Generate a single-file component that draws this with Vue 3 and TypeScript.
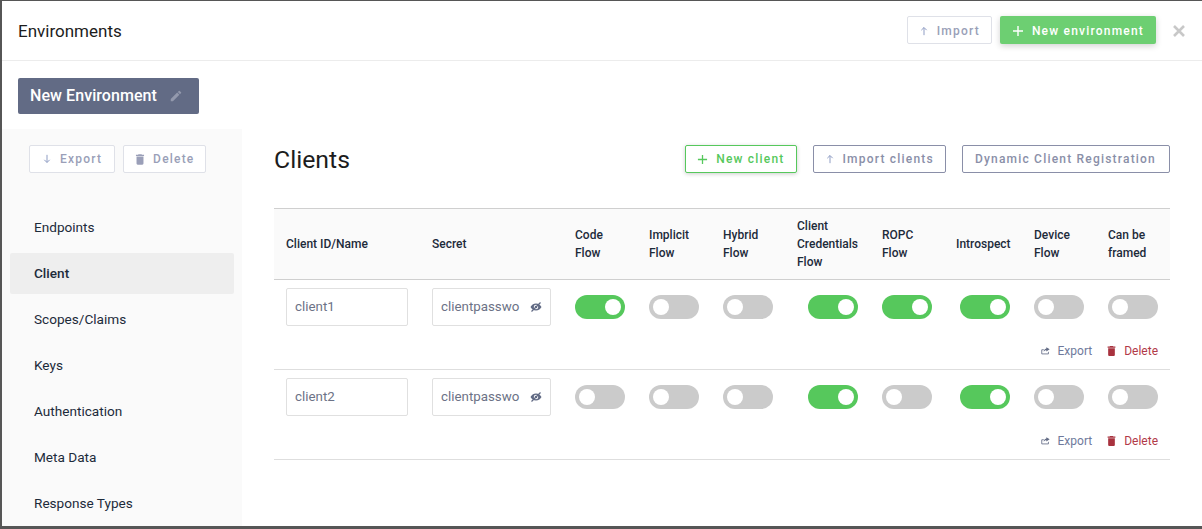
<script setup lang="ts">
import { ref } from 'vue';

type Flag = 'code' | 'implicit' | 'hybrid' | 'credentials' | 'ropc' | 'introspect' | 'device' | 'framed';

const navItems = ['Endpoints', 'Client', 'Scopes/Claims', 'Keys', 'Authentication', 'Meta Data', 'Response Types'];

const flows: { key: Flag; lines: string[]; end?: boolean }[] = [
  { key: 'code', lines: ['Code', 'Flow'] },
  { key: 'implicit', lines: ['Implicit', 'Flow'] },
  { key: 'hybrid', lines: ['Hybrid', 'Flow'] },
  { key: 'credentials', lines: ['Client', 'Credentials', 'Flow'], end: true },
  { key: 'ropc', lines: ['ROPC', 'Flow'] },
  { key: 'introspect', lines: ['Introspect'], end: true },
  { key: 'device', lines: ['Device', 'Flow'] },
  { key: 'framed', lines: ['Can be', 'framed'] },
];

const clients = ref<{ id: string; secret: string; flags: Record<Flag, boolean> }[]>([
  {
    id: 'client1',
    secret: 'clientpasswo',
    flags: { code: true, implicit: false, hybrid: false, credentials: true, ropc: true, introspect: true, device: false, framed: false },
  },
  {
    id: 'client2',
    secret: 'clientpasswo',
    flags: { code: false, implicit: false, hybrid: false, credentials: true, ropc: false, introspect: true, device: false, framed: false },
  },
]);
</script>

<template>
  <div class="backdrop">
    <div class="modal">
      <header class="modal-header">
        <h1 class="modal-title">Environments</h1>
        <div class="header-actions">
          <button class="btn btn-outline tight">
            <svg class="arrow" viewBox="0 0 12 12"><path d="M6 11V2M2.800 5L6 1.800 9.200 5" /></svg>
            Import
          </button>
          <button class="btn btn-green">
            <svg class="plus" viewBox="0 0 12 12"><path d="M6 1v10M1 6h10" /></svg>
            New environment
          </button>
          <svg class="close" viewBox="0 0 14 14"><path d="M2 2l10 10M12 2L2 12" /></svg>
        </div>
      </header>

      <div class="env-row">
        <div class="env-chip">
          New Environment
          <svg class="pencil" viewBox="0 0 24 24"><path d="M3 17.250V21h3.750L17.810 9.940l-3.750-3.750L3 17.250zM20.710 7.040a1 1 0 0 0 0-1.410l-2.340-2.340a1 1 0 0 0-1.410 0l-1.830 1.830 3.750 3.750 1.830-1.830z" /></svg>
        </div>
      </div>

      <div class="body">
        <aside class="sidebar">
          <div class="side-actions">
            <button class="btn btn-outline">
              <svg class="arrow" viewBox="0 0 12 12"><path d="M6 1v9M2.800 7L6 10.200 9.200 7" /></svg>
              Export
            </button>
            <button class="btn btn-outline tight">
              <svg class="trash" viewBox="4 2.500 16 19"><path d="M6 19a2 2 0 0 0 2 2h8a2 2 0 0 0 2-2V7H6v12zM19 4h-3.500l-1-1h-5l-1 1H5v2h14V4z" /></svg>
              Delete
            </button>
          </div>
          <nav class="nav">
            <a v-for="item in navItems" :key="item" class="nav-item" :class="{ active: item === 'Client' }">{{ item }}</a>
          </nav>
        </aside>

        <main class="content">
          <div class="content-head">
            <h2 class="clients-title">Clients</h2>
            <div class="client-actions">
              <button class="btn btn-green-outline tight">
                <svg class="plus" viewBox="0 0 12 12"><path d="M6 1v10M1 6h10" /></svg>
                New client
              </button>
              <button class="btn btn-dark-outline tight">
                <svg class="arrow" viewBox="0 0 12 12"><path d="M6 11V2M2.800 5L6 1.800 9.200 5" /></svg>
                Import clients
              </button>
              <button class="btn btn-dark-outline wide">Dynamic Client Registration</button>
            </div>
          </div>

          <div class="table">
            <div class="grid head-row">
              <div class="th">Client ID/Name</div>
              <div class="th">Secret</div>
              <div v-for="flow in flows" :key="flow.key" class="th">
                <span v-for="line in flow.lines" :key="line">{{ line }}</span>
              </div>
            </div>

            <div v-for="client in clients" :key="client.id" class="client-row">
              <div class="grid">
                <div class="field">{{ client.id }}</div>
                <div class="field secret">
                  <span class="secret-text">{{ client.secret }}</span>
                  <svg class="eye" viewBox="0 0 24 24"><path d="M12 5C7 5 2.700 8.100 1 12c1.700 3.900 6 7 11 7s9.300-3.100 11-7c-1.700-3.900-6-7-11-7zm0 11.500a4.500 4.500 0 1 1 0-9 4.500 4.500 0 0 1 0 9zm0-7a2.500 2.500 0 1 0 0 5 2.500 2.500 0 0 0 0-5z" /><path class="slash" d="M3 21L21 3" /></svg>
                </div>
                <div v-for="flow in flows" :key="flow.key" class="toggle-cell" :class="{ end: flow.end }">
                  <button class="toggle" :class="{ on: client.flags[flow.key] }" @click="client.flags[flow.key] = !client.flags[flow.key]">
                    <span class="knob"></span>
                  </button>
                </div>
              </div>
              <div class="row-actions">
                <a class="link export">
                  <svg viewBox="0 0 12 12"><path class="share" d="M9.500 7v2.500h-8V4.500H4" /><path class="share-fill" d="M7 1.500L11 4 7 6.500V5C5.500 5 4.500 5.600 3.800 7 3.900 5 5 3.300 7 3z" /></svg>
                  Export
                </a>
                <a class="link delete">
                  <svg viewBox="5 3 14 18"><path d="M6 19a2 2 0 0 0 2 2h8a2 2 0 0 0 2-2V7H6v12zM19 4h-3.500l-1-1h-5l-1 1H5v2h14V4z" /></svg>
                  Delete
                </a>
              </div>
            </div>
          </div>
        </main>
      </div>
    </div>
  </div>
</template>

<style>
html,
body {
  margin: 0;
  overflow: hidden;
}
</style>

<style scoped>
.backdrop {
  height: 529px;
  box-sizing: border-box;
  padding: 1px 0 3px 2px;
  background: #565656;
  font-family: Roboto, sans-serif;
  overflow: hidden;
}

.modal {
  height: 100%;
  background: #fff;
  display: flex;
  flex-direction: column;
  overflow: hidden;
}

/* Header */
.modal-header {
  height: 59px;
  box-sizing: content-box;
  flex: none;
  display: flex;
  align-items: center;
  justify-content: space-between;
  padding: 0 16px;
  border-bottom: 1px solid #ececec;
}

.modal-title {
  margin: 0;
  font-size: 17px;
  font-weight: 400;
  color: #1c1c1c;
}

.header-actions {
  display: flex;
  align-items: center;
  gap: 8px;
  margin-top: -1px;
}

.close {
  width: 14px;
  height: 14px;
  margin: 2px 0 0 8px;
  fill: none;
  stroke: #c8c8c8;
  stroke-width: 2.600;
}

/* Buttons */
.btn {
  height: 28px;
  box-sizing: border-box;
  display: inline-flex;
  align-items: center;
  gap: 8px;
  padding: 0 12px;
  border-radius: 2px;
  background: #fff;
  font-family: Roboto, sans-serif;
  font-size: 12px;
  font-weight: 500;
  letter-spacing: 1.200px;
  white-space: nowrap;
  cursor: pointer;
}

.btn.tight {
  padding: 0 11px;
}

.btn.wide {
  padding: 0 13px 0 12px;
}

.header-actions .btn {
  padding-top: 2px;
}

.btn-outline {
  border: 1px solid #dfe1e8;
  color: #9a9fb8;
}

.btn-green {
  border: 0;
  background: #6dcf72;
  color: #fff;
  box-shadow: 0 2px 6px rgba(0, 0, 0, 0.18);
}

.btn-green-outline {
  border: 1px solid #56c85c;
  color: #56c85c;
  box-shadow: 0 1px 4px rgba(0, 0, 0, 0.2);
}

.btn-green-outline .plus {
  width: 11px;
  height: 11px;
}

.btn-dark-outline {
  border: 1px solid #8a8fa8;
  color: #8a8fa8;
}

.arrow {
  width: 10px;
  height: 10px;
  fill: none;
  stroke: #8f9dc4;
  stroke-width: 1.200;
}

.plus {
  width: 12px;
  height: 12px;
  fill: none;
  stroke: currentColor;
  stroke-width: 1.400;
}

.trash {
  width: 10px;
  height: 11px;
  fill: #9a9fb8;
}

/* Environment chip */
.env-row {
  flex: none;
  height: 68px;
  padding: 17px 0 0 16px;
  box-sizing: border-box;
}

.env-chip {
  width: 181px;
  height: 36px;
  box-sizing: border-box;
  display: flex;
  align-items: center;
  gap: 12px;
  padding-left: 12px;
  padding-bottom: 2px;
  border-radius: 2px;
  background: #626b85;
  color: #fff;
  font-size: 16px;
  font-weight: 500;
  letter-spacing: 0.070px;
  white-space: nowrap;
}

.pencil {
  width: 14px;
  height: 14px;
  margin-top: 2px;
  fill: #9399ad;
}

/* Body */
.body {
  flex: 1;
  min-height: 0;
  display: flex;
}

.sidebar {
  width: 240px;
  flex: none;
  background: #fafafa;
  padding: 16px 8px 0;
  box-sizing: border-box;
}

.side-actions {
  display: flex;
  gap: 8px;
  padding-left: 19px;
}

.nav {
  display: flex;
  flex-direction: column;
  gap: 5px;
  margin-top: 34px;
}

.nav-item {
  height: 41px;
  box-sizing: border-box;
  flex: none;
  display: flex;
  align-items: center;
  padding: 0 0 2px 24px;
  border-radius: 2px;
  font-size: 13.600px;
  font-weight: 400;
  color: #1d2b3a;
}

.nav-item.active {
  background: #eeeeee;
  font-weight: 500;
}

.content {
  flex: 1;
  min-width: 0;
  padding: 16px 32px 0;
}

.content-head {
  display: flex;
  align-items: center;
  justify-content: space-between;
  height: 28px;
}

.clients-title {
  margin: 0;
  padding-top: 1px;
  font-size: 24.800px;
  font-weight: 400;
  color: #1c1c1c;
}

.client-actions {
  display: flex;
  gap: 16px;
}

/* Table */
.table {
  margin-top: 35px;
  border-top: 1px solid #cfcfcf;
}

.grid {
  display: grid;
  grid-template-columns: 146px 143px 74px 74px 74px 85px 74px 78px 74px 74px;
}

.head-row {
  height: 70px;
  background: #fafafa;
  border-bottom: 1px solid #cfcfcf;
}

.th {
  display: flex;
  flex-direction: column;
  justify-content: center;
  padding-left: 12px;
  font-size: 12px;
  font-weight: 500;
  line-height: 18px;
  color: #1d2b3a;
}

.client-row {
  height: 90px;
  box-sizing: border-box;
  padding-top: 8px;
  border-bottom: 1px solid #dedede;
}

.field {
  width: 122px;
  height: 38px;
  box-sizing: border-box;
  margin-left: 12px;
  display: flex;
  align-items: center;
  padding: 0 0 2px 8px;
  border: 1px solid #e0e0e0;
  border-radius: 2px;
  font-size: 13.333px;
  color: #6c7286;
}

.field.secret {
  width: 119px;
}

.secret-text {
  width: 79px;
  flex: none;
  white-space: nowrap;
}

.eye {
  width: 12px;
  height: 12px;
  margin: 2px 0 0 10px;
  flex: none;
  fill: #626b85;
}

.slash {
  fill: none;
  stroke: #626b85;
  stroke-width: 2.500;
}

.toggle-cell {
  display: flex;
  align-items: center;
  padding-left: 12px;
  height: 38px;
}

.toggle-cell.end {
  justify-content: flex-end;
  padding-right: 12px;
}

.toggle {
  width: 50px;
  height: 24px;
  flex: none;
  padding: 4px;
  border: 0;
  border-radius: 12px;
  background: #cbcbcb;
  display: flex;
  justify-content: flex-start;
  cursor: pointer;
}

.toggle.on {
  background: #56c85c;
  justify-content: flex-end;
}

.knob {
  width: 16px;
  height: 16px;
  border-radius: 50%;
  background: #fff;
}

.row-actions {
  display: flex;
  justify-content: flex-end;
  gap: 14px;
  padding: 17px 12px 0 0;
}

.link {
  display: inline-flex;
  align-items: center;
  gap: 7px;
  font-size: 12px;
  line-height: 16px;
  cursor: pointer;
}

.link svg {
  width: 11px;
  height: 10px;
}

.export {
  color: #6f7a9c;
}

.share {
  fill: none;
  stroke: #626b85;
  stroke-width: 1;
}

.share-fill {
  fill: #626b85;
}

.delete {
  color: #b23a48;
}

.delete svg {
  fill: #a8323e;
}
</style>
